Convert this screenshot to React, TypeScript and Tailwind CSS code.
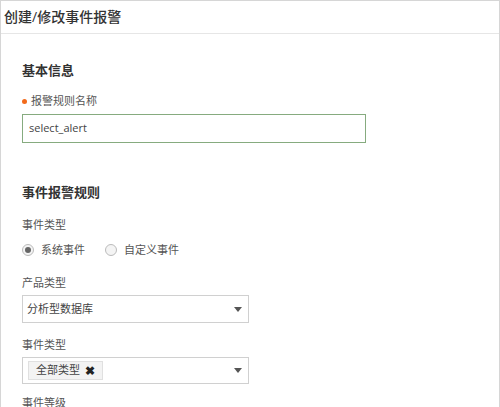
import React from 'react';

const font = { fontFamily: '"Open Sans", "Noto Sans CJK SC", sans-serif' };

function Caret() {
  return (
    <svg width="8" height="5" viewBox="0 0 8 5" className="shrink-0">
      <path d="M0 0 L8 0 L4 5 Z" fill="#555" />
    </svg>
  );
}

function Radio({ checked, label }: { checked?: boolean; label: string }) {
  return (
    <label className="flex items-center">
      <span className="flex h-[12px] w-[12px] items-center justify-center rounded-full border border-[#bbb] bg-[#f4f4f4]">
        {checked && <span className="h-[6px] w-[6px] rounded-full bg-[#666]" />}
      </span>
      <span className="ml-[7px] text-[11px] leading-[16px] text-[#555]">{label}</span>
    </label>
  );
}

function Label({ children, className = '' }: { children: React.ReactNode; className?: string }) {
  return <div className={`text-[11px] leading-[16px] text-[#555] ${className}`}>{children}</div>;
}

export default function App() {
  return (
    <div style={font} className="h-[407px] w-[500px] overflow-hidden border-x border-t border-[#d6d6d6] bg-white">
      <div className="flex h-[33px] items-center border-b border-[#e6e6e6] px-[3px]">
        <h1 className="text-[14px] font-medium leading-[20px] text-[#333]">创建/修改事件报警</h1>
      </div>

      <div className="px-[21px]">
        <h2 className="mt-[26px] text-[13px] font-bold leading-[20px] text-[#333]">基本信息</h2>

        <div className="mt-[13px] flex items-center">
          <span className="h-[5px] w-[5px] rounded-full bg-[#f26a1b]" />
          <Label className="ml-[4px]">报警规则名称</Label>
        </div>
        <div className="mt-[5px] flex h-[29px] w-[344px] items-center border border-[#86ab7f] bg-white px-[6px]">
          <span className="text-[11px] text-[#444]">select_alert</span>
        </div>

        <h2 className="mt-[39px] text-[13px] font-bold leading-[20px] text-[#333]">事件报警规则</h2>

        <Label className="mt-[15px]">事件类型</Label>
        <div className="mt-[9px] flex items-center gap-[20px]">
          <Radio checked label="系统事件" />
          <Radio label="自定义事件" />
        </div>

        <Label className="mt-[17px]">产品类型</Label>
        <div className="mt-[4px] flex h-[28px] w-[227px] items-center justify-between border border-[#d0d0d0] bg-white pl-[4px] pr-[6px]">
          <span className="text-[11px] text-[#444]">分析型数据库</span>
          <Caret />
        </div>

        <Label className="mt-[14px]">事件类型</Label>
        <div className="mt-[4px] flex h-[27px] w-[227px] items-center justify-between border border-[#d0d0d0] bg-white pl-[5px] pr-[6px]">
          <span className="flex h-[19px] items-center gap-[5px] border border-[#e0e0e0] bg-[#f3f3f3] px-[7px] text-[11px] text-[#444]">
            全部类型
            <span className="text-[12px] font-bold leading-none text-[#222]">✖</span>
          </span>
          <Caret />
        </div>

        <Label className="mt-[11px]">事件等级</Label>
      </div>
    </div>
  );
}
